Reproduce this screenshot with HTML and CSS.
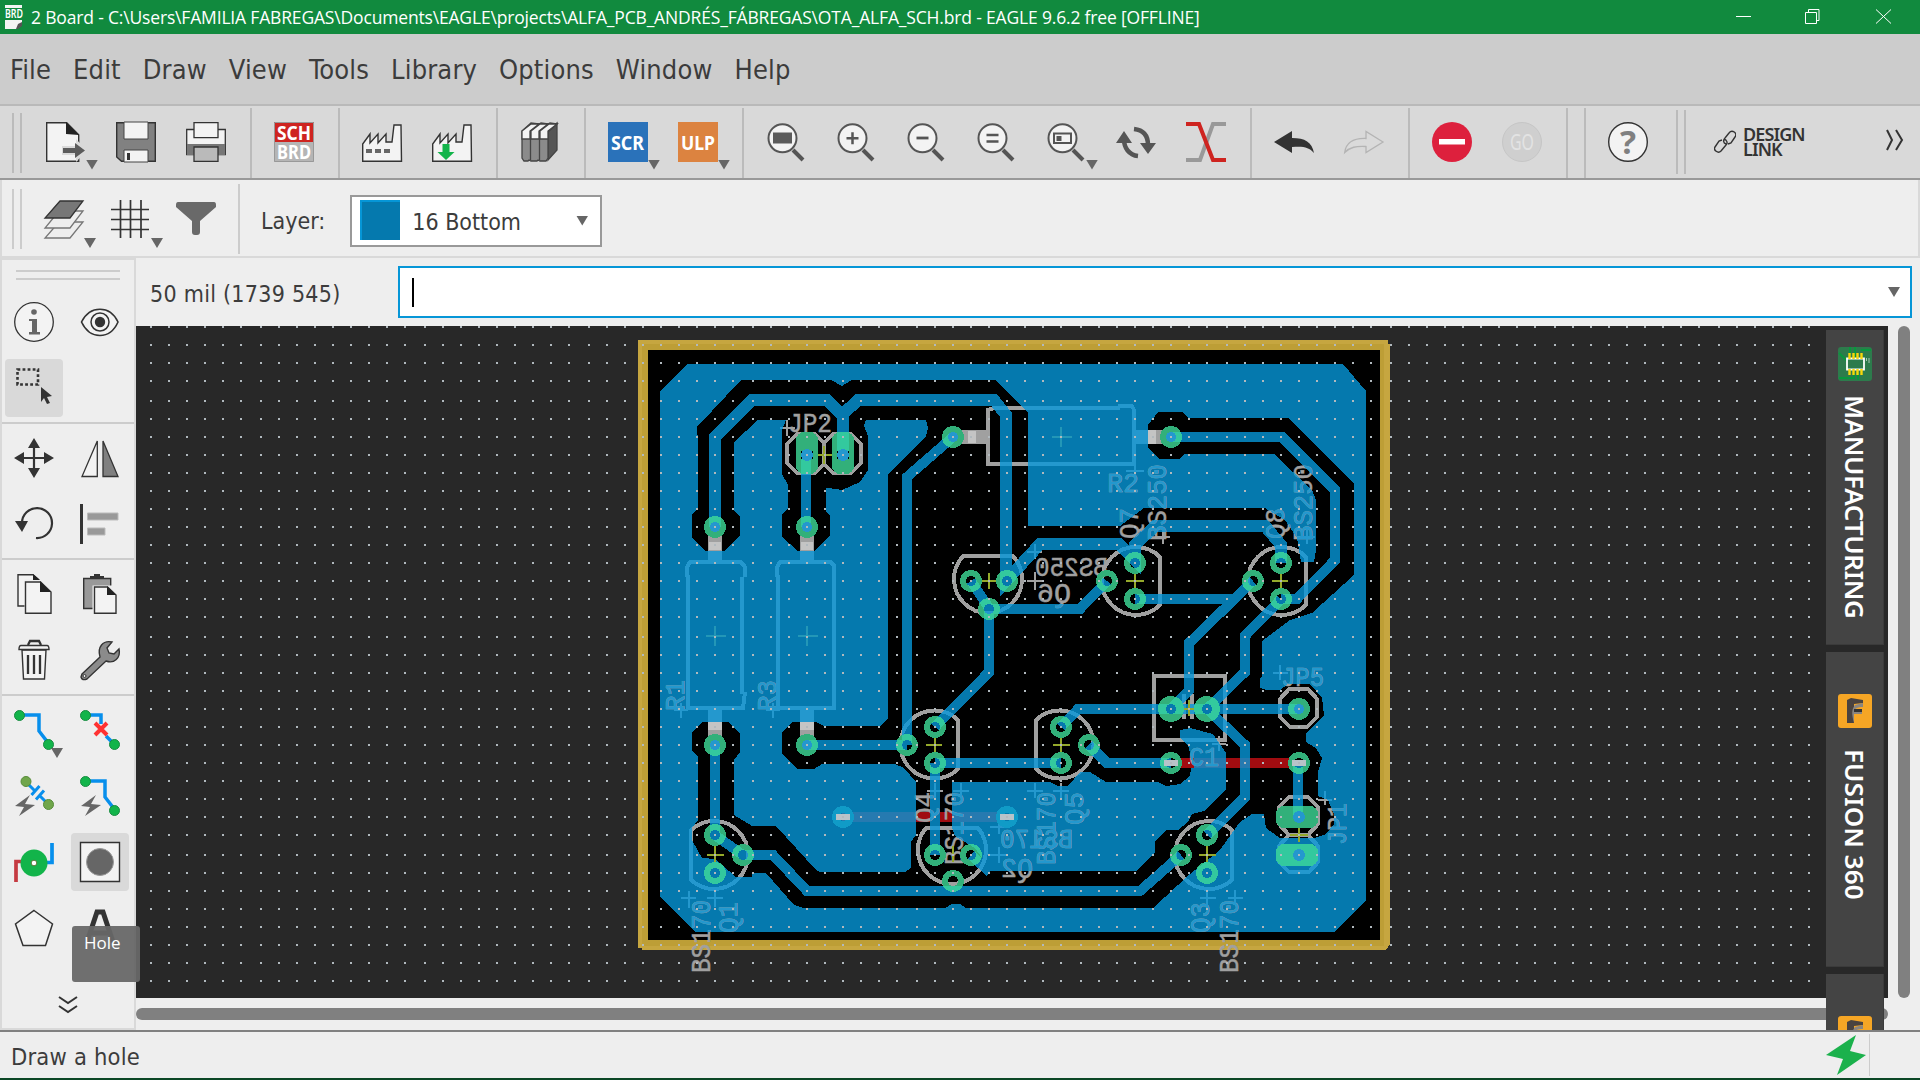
FILE: index.html
```html
<!DOCTYPE html>
<html lang="en">
<head>
<meta charset="utf-8">
<title>2 Board - EAGLE 9.6.2 free</title>
<link rel="stylesheet" href="styles.css">
</head>
<body>
<div class="app">
<header class="titlebar">
  <svg class="app-icon" width="20" height="24" viewBox="0 0 20 24"><path d="M1 0h17v3H1zM1 15h17v5l-5 4H1z" fill="#f4f4f4"/><path d="M18 17v4l-4 3h-2l2-5z" fill="#555"/><text x="1" y="13" font-size="12" font-weight="600" textLength="18" lengthAdjust="spacingAndGlyphs" fill="#fff">BRD</text></svg>
  <span class="title">2 Board - C:\Users\FAMILIA FABREGAS\Documents\EAGLE\projects\ALFA_PCB_ANDRÉS_FÁBREGAS\OTA_ALFA_SCH.brd - EAGLE 9.6.2 free [OFFLINE]</span>
  <svg class="win-controls" width="160" height="16" viewBox="0 0 160 16" fill="none" stroke="#fff"><path d="M1 7.500h15M73.500 3.500V.5h10.500v11h-3M70.500 3.500h11v11h-11zM141 .5l15 14M156 .5l-15 14"/></svg>
</header>
<nav class="menubar"><span>File</span><span>Edit</span><span>Draw</span><span>View</span><span>Tools</span><span>Library</span><span>Options</span><span>Window</span><span>Help</span></nav>

<div class="toolbar main-tools">
  <i class="grip"></i>
  <div class="tool drop"><svg viewBox="0 0 40 40"><path d="M.7.7h20l12 12v26.600H.7z" fill="#f3f3f3" stroke="#333" stroke-width="1.400"/><path d="M20 0l13 13-13-1z" fill="#222"/><path d="M16 24h14v-7l11 11.500L30 40v-7H16z" fill="#d9d9d9"/><path d="M17 26h12v-5l10 7.500-10 7.500v-5H17z" fill="#5b5b5b"/></svg></div>
  <div class="tool"><svg viewBox="0 0 40 40"><path d="M.7.7h38.600v38.600H5.500L.7 35z" fill="#818181" stroke="#333" stroke-width="1.400"/><path d="M8 0h24v17H8zM8 28h24v12H8z" fill="#f3f3f3" stroke="#444"/><path d="M11 31h3v7h-3z" fill="#333"/></svg></div>
  <div class="tool"><svg viewBox="0 0 40 40"><path d="M.7 7.500h38.600v25H.7z" fill="#f3f3f3" stroke="#333" stroke-width="1.300"/><path d="M1 22h38v11H1z" fill="#777"/><path d="M8 .7h24v15H8z" fill="#f3f3f3" stroke="#333" stroke-width="1.300"/><path d="M8 25h24v14.300H8z" fill="#bababa" stroke="#333" stroke-width="1.300"/></svg></div>
  <i class="sep"></i>
  <div class="tool"><svg viewBox="0 0 40 40"><path fill="#ce2420" d="M0 0h40v20H0z"/><path fill="#b5b5b5" d="M0 20h40v20H0z"/><path d="M.5.5h39v39H.5z" fill="none" stroke="#999"/><g class="badge-text" font-size="20" fill="#fff"><text x="3" y="17.500" textLength="34" lengthAdjust="spacingAndGlyphs">SCH</text><text x="3" y="37" textLength="34" lengthAdjust="spacingAndGlyphs">BRD</text></g></svg></div>
  <i class="sep"></i>
  <div class="tool"><svg viewBox="0 0 40 40"><path d="M.7 39.300V22L8 12v9l8-9v9l8-9v8h6L32 3h7l.5 36.300z" fill="#f3f3f3" stroke="#333" stroke-width="1.400"/><path d="M4 29h24" stroke="#666" stroke-width="4" stroke-dasharray="6 3"/></svg></div>
  <div class="tool"><svg viewBox="0 0 40 40"><path d="M.7 39.300V22L8 12v9l8-9v9l8-9v8h6L32 3h7l.5 36.300z" fill="#f3f3f3" stroke="#333" stroke-width="1.400"/><path d="M10.500 22h7v8h5L14 38 5.500 30h5z" fill="#12b44a"/></svg></div>
  <i class="sep"></i>
  <div class="tool"><svg viewBox="0 0 40 40"><g fill="#8b8b8b" stroke="#444" stroke-width="1.300"><path d="M28 9l9-8v27l-9 10z" fill="#555"/><path d="M2 9l9-8 8 1 2-1 7 1 2-1 7 1-9 8v26l-2 3h-6l-2-1-1 1h-6l-2-1-1 1H4l-2-3z"/><path d="M2 9l9-7h8l-9 7v8H2zM11 9l9-7h8l-9 7v8h-8zM20 9l9-7h8l-9 7v8h-8z" fill="#f3f3f3"/><path d="M10.500 17v21M19.500 17v21"/></g></svg></div>
  <i class="sep"></i>
  <div class="tool drop"><svg viewBox="0 0 40 40"><path fill="#2a72ba" d="M0 0h40v40H0z"/><text class="badge-text" x="3" y="27.500" font-size="20" textLength="33" lengthAdjust="spacingAndGlyphs" fill="#fff">SCR</text></svg></div>
  <div class="tool drop"><svg viewBox="0 0 40 40"><path fill="#dc8340" d="M0 0h40v40H0z"/><text class="badge-text" x="3" y="27.500" font-size="20" textLength="34" lengthAdjust="spacingAndGlyphs" fill="#fff">ULP</text></svg></div>
  <i class="sep"></i>
  <div class="tool"><svg viewBox="-1 0 40 40"><use href="#lens"/><path fill="#5b5b5b" d="M6 10.500h19v11H6z"/></svg></div>
  <div class="tool"><svg viewBox="-1 0 40 40"><use href="#lens"/><path d="M9.500 16.300h12M15.500 10.300v12" stroke="#555" stroke-width="2.500"/></svg></div>
  <div class="tool"><svg viewBox="-1 0 40 40"><use href="#lens"/><path d="M9.500 16h12" stroke="#555" stroke-width="2.800"/></svg></div>
  <div class="tool"><svg viewBox="-1 0 40 40"><use href="#lens"/><path d="M9.500 13h12M9.500 19.500h12" stroke="#555" stroke-width="2.500"/></svg></div>
  <div class="tool drop"><svg viewBox="-1 0 40 40"><use href="#lens"/><path d="M7 11.500h17v9.500H7z" fill="none" stroke="#555" stroke-width="2"/><path fill="#555" d="M9.500 14h5v5h-5z"/></svg></div>
  <div class="tool"><svg viewBox="0 0 40 40"><path d="M8 17c0 9 5 16 14 17M32 23C32 13 27 8 18 7" fill="none" stroke="#555" stroke-width="4.500"/><path d="M8 9l8 12H0zM32 32l8-11H24z" fill="#555"/></svg></div>
  <div class="tool"><svg viewBox="0 0 40 40" fill="none" stroke-width="4"><path d="M0 38h14L27 2h13" stroke="#999"/><path d="M0 2h13l14 36h13" stroke="#ce2420"/></svg></div>
  <i class="sep"></i>
  <div class="tool"><svg viewBox="0 0 40 40"><path d="M0 20L18 9v7c13 0 20 4 22 15-5-6-11-7-22-6v6z" fill="#333"/></svg></div>
  <div class="tool"><svg viewBox="0 0 40 40"><path d="M39 20L22 9.500v7C8 16 2 21 .7 30.500 6 25 12 24 22 24.500v6z" fill="#dadada" stroke="#b4b4b4" stroke-width="1.300"/></svg></div>
  <i class="sep"></i>
  <div class="tool"><svg viewBox="0 0 40 40"><circle cx="20" cy="20" r="20" fill="#dd203d"/><path fill="#fff" d="M7 17h26v5.500H7z"/></svg></div>
  <div class="tool"><svg viewBox="0 0 40 40"><circle cx="20" cy="20" r="19.500" fill="#cfcfcf" stroke="#c6c6c6"/><text x="8" y="28" font-size="21" textLength="24" lengthAdjust="spacingAndGlyphs" fill="#e3e3e3">GO</text></svg></div>
  <i class="sep closing"></i><i class="sep opening"></i>
  <div class="tool"><svg viewBox="0 0 40 40"><circle cx="20" cy="20" r="19.300" fill="#f3f3f3" stroke="#333" stroke-width="1.400"/><text x="12" y="32" font-size="32" font-weight="700" textLength="16" lengthAdjust="spacingAndGlyphs" fill="#808080">?</text></svg></div>
  <i class="grip second"></i>
  <svg class="link" width="22" height="24" viewBox="0 0 22 24" fill="none" stroke="#333" stroke-width="1.400"><path d="M12 14c-3-1-3-4-1-6l4-5c3-4 9 0 6 4l-4 6-3 1M10 9c3 1 4 4 2 6l-5 6c-3 3-8-1-6-4l4-6 3-1"/></svg>
  <div class="design-link"><span>DESIGN</span><span>LINK</span></div>
  <svg class="more" width="18" height="24" viewBox="0 0 18 24" fill="none" stroke="#333" stroke-width="2"><path d="M1 2l5 10-5 10M10 2l6 10-6 10"/></svg>
</div>

<div class="toolbar layer-tools">
  <i class="grip"></i>
  <div class="tool drop"><svg viewBox="0 0 40 40"><g stroke="#777" fill="#eee" stroke-width="1.300"><path d="M15 22h24L26 38H1z"/><path d="M15 11h24L26 28H1z"/><path d="M16 1h23L26 18H1z" fill="#777" stroke="#333"/></g></svg></div>
  <div class="tool drop grid-tool"><svg viewBox="0 0 40 40"><path d="M9.500 0v38M19.500 0v38M30 0v38M0 9.500h38M0 19.500h38M0 29.500h38" stroke="#333" stroke-width="1.700"/></svg></div>
  <div class="tool filter-tool"><svg viewBox="0 0 40 40"><path d="M2 2h36q2 0 2 3v2L24 21v11q0 3-3 3h-2q-3 0-3-3V21L0 7V5q0-3 2-3z" fill="#696969"/></svg></div>
  <i class="sep"></i>
  <label>Layer:</label>
  <div class="combo"><i class="swatch"></i><span>16 Bottom</span><i class="arrow"></i></div>
</div>

<div class="workspace">
<aside class="palette">
  <i class="palette-grip"></i>
  <div class="group">
    <div class="cell"><svg viewBox="0 0 40 40"><circle cx="20" cy="20" r="19.300" fill="#f3f3f3" stroke="#333" stroke-width="1.300"/><circle cx="20" cy="10" r="2.800" fill="#666"/><path d="M15 17h8v13h3v2.500H15V30h3V19h-3z" fill="#666"/></svg></div>
    <div class="cell"><svg viewBox="0 0 40 40"><path d="M1.500 20C10 3 30 3 38 20 30 38 10 38 1.500 20z" fill="#f3f3f3" stroke="#333" stroke-width="1.600"/><circle cx="20" cy="20" r="9" fill="none" stroke="#333" stroke-width="1.500"/><circle cx="20" cy="20" r="5.200" fill="#333"/></svg></div>
    <div class="cell active"><svg viewBox="0 0 40 40"><path d="M3.500 1.500H24v15H3.500z" fill="none" stroke="#333" stroke-width="2.600" stroke-dasharray="2.800 2.260"/><path d="M27 19l11 9-5 1 3 6-3 1-3-6-3 4z" fill="#333"/></svg></div>
    <div></div>
  </div>
  <div class="group">
    <div class="cell"><svg viewBox="0 0 40 40"><path d="M6 20h28M20 6v28" stroke="#333" stroke-width="2.200"/><path d="M20 0l6 10H14zM20 40l6-10H14zM0 20l10-6v12zM40 20l-10-6v12z" fill="#333"/></svg></div>
    <div class="cell"><svg viewBox="0 0 40 40"><path d="M17.300 3v35.500H2z" fill="#f3f3f3" stroke="#333" stroke-width="1.300"/><path d="M23 3v35.500h15z" fill="#808080" stroke="#333" stroke-width="1.300"/></svg></div>
    <div class="cell"><svg viewBox="0 0 40 40"><path d="M8 19a15 15 0 1 1 14 15" fill="none" stroke="#333" stroke-width="2.200"/><path d="M1 17h13L8 28z" fill="#333"/></svg></div>
    <div class="cell"><svg viewBox="0 0 40 40"><path d="M0 0h3v40H0z" fill="#333"/><path d="M7.500 9h30.500v7H7.500zM7.500 24H25v7H7.500z" fill="#999" stroke="#bbb"/></svg></div>
  </div>
  <div class="group">
    <div class="cell"><svg viewBox="0 0 40 40" stroke="#333" stroke-width="1.400" fill="#f3f3f3"><path d="M4 .7h15L25 6v26H4z"/><path d="M12 7h15l10 10v22.300H12z" stroke="#eee" stroke-width="3"/><path d="M11.500 8h15L37 18v21.300H11.500z"/><path d="M26 7l11 11H26zM19 0l7 6h-7z" fill="#222" stroke="none"/></svg></div>
    <div class="cell"><svg viewBox="0 0 40 40"><path d="M3.700 4.500h27V34.500h-27z" fill="#999" stroke="#333" stroke-width="1.400"/><path d="M10 5V2h4V0h6v2h4v3z" fill="#333"/><path d="M12.500 11.500H37V40H12.500z" fill="#eee"/><path d="M14.500 13h13L36 21v18.300H14.500z" fill="#f3f3f3" stroke="#333" stroke-width="1.400"/><path d="M27 12v9h9z" fill="#222"/></svg></div>
    <div class="cell"><svg viewBox="0 0 40 40"><path d="M8 10h24l-1.500 29h-21z" fill="#f3f3f3" stroke="#333" stroke-width="1.400"/><path d="M14 5l2-4h9l2 4" fill="none" stroke="#333" stroke-width="2.300"/><path d="M7 5.500h26q2 0 2 4H5q0-4 2-4z" fill="#f3f3f3" stroke="#333" stroke-width="1.400"/><path d="M14 15v19M20 15v19M26 15v19" stroke="#333" stroke-width="2.300"/></svg></div>
    <div class="cell"><svg viewBox="0 0 40 40"><path d="M2 34L20 17C17 7 23 0 32 2l-5 6 2 5 5 1 5-5c2 9-5 15-13 12L7 39q-5 2-6-2z" fill="#8b8b8b" stroke="#333" stroke-width="1.400"/><circle cx="4.500" cy="36" r="1.500" fill="#eee" stroke="#333"/></svg></div>
  </div>
  <div class="group">
    <div class="cell drop"><svg viewBox="0 0 40 40"><path d="M6 5h19v16l10 13" fill="none" stroke="#078fec" stroke-width="3.500"/><g fill="#12b44a" stroke="#168c40"><circle cx="5.500" cy="5.500" r="5"/><circle cx="34.500" cy="34.500" r="5"/></g></svg></div>
    <div class="cell"><svg viewBox="0 0 40 40"><path d="M6 5h15v9M26 26l8 8" fill="none" stroke="#078fec" stroke-width="3.500"/><g fill="#12b44a" stroke="#168c40"><circle cx="5.500" cy="5.500" r="5"/><circle cx="34.500" cy="34.500" r="5"/></g><path d="M15 13l12 12M27 13L15 25" stroke="#ff3232" stroke-width="4"/></svg></div>
    <div class="cell"><svg viewBox="0 0 40 40"><path d="M12 6l9 9M26 20l9 9M17.500 19l8-9M22 23.500l8-9" fill="none" stroke="#078fec" stroke-width="3"/><g fill="#70a64b" stroke="#578c39"><circle cx="12" cy="5.500" r="5"/><circle cx="34.500" cy="28.500" r="5"/></g><path d="M16 19L1 30l9 1-5 9 16-11-10-1z" fill="#666"/></svg></div>
    <div class="cell"><svg viewBox="0 0 40 40"><path d="M6 5h19v16l10 13" fill="none" stroke="#078fec" stroke-width="3.500"/><g fill="#12b44a" stroke="#168c40"><circle cx="5.500" cy="5.500" r="5"/><circle cx="34.500" cy="34.500" r="5"/></g><path d="M16 19L1 30l9 1-5 9 16-11-10-1z" fill="#666"/></svg></div>
    <div class="cell"><svg viewBox="0 0 40 40"><path d="M10 19.500H2V40" fill="none" stroke="#c53a41" stroke-width="3.700"/><path d="M32 20.500h6V1" fill="none" stroke="#078fec" stroke-width="3.700"/><circle cx="20" cy="21" r="13.500" fill="#12b44a"/><circle cx="20" cy="21" r="2.800" fill="#fff" stroke="#587b39"/></svg></div>
    <div class="cell active"><svg viewBox="0 0 40 40"><path d="M.5.5h39v39H.5z" fill="#f3f3f3" stroke="#333" stroke-width="1.400"/><circle cx="20" cy="20" r="13.500" fill="#666" stroke="#999"/></svg></div>
    <div class="cell"><svg viewBox="0 0 40 40"><path d="M20 2.500l18.500 13.500-7 21.500H9L1.500 16z" fill="#f3f3f3" stroke="#333" stroke-width="1.500"/></svg></div>
    <div class="cell"><svg viewBox="0 0 40 40"><path d="M7 34L17 4h6l10 30M11 25h18" fill="none" stroke="#333" stroke-width="5"/></svg></div>
  </div>
  <svg class="palette-more" width="20" height="18" viewBox="0 0 20 18" fill="none" stroke="#333" stroke-width="2"><path d="M1 1l9 6 9-6M1 10l9 6 9-6"/></svg>
  <div class="tooltip">Hole</div>
</aside>

<main class="editor">
  <div class="command"><span class="coords">50 mil (1739 545)</span><div class="input"><i class="caret"></i><i class="arrow"></i></div></div>
  <div class="view">
  <div class="canvas">
  <svg class="board" width="1752" height="672" viewBox="136 326 1752 672">
    <defs>
      <path id="plane" d="M660 391L688 364H1343L1366 391V900L1334 932H696L660 897z"/>
      <path id="clear" d="M698 443L697 427 741 380H831L842 386 852 380H996L1028 413V526H1120L1144 508H1265L1285 520 1297 538 1301 562H1314L1316 550V500L1312 490 1274 454H1184L1180 459H1160L1148 448V425L1158 412H1182L1188 418H1288L1354 483V575L1312 613 1290 620 1262 641V676L1260 678V688L1266 690H1280L1288 684H1310L1322 698 1324 715 1306 733V742L1316 748 1322 758 1318 772V796L1328 800 1334 814V824L1326 834 1314 838H1280L1266 828 1264 814H1252L1240 822 1220 850 1190 874 1153 908H966L960 904H952L945 908H804L794 905 766 873H752V877H736L715 859 702 858 692 840V828L698 820V757L692 750V732L702 722H728L740 733V752L734 760V815L752 826H776L816 870 820 872H905L911 868V842L916 835V782L904 768 895 764H822L814 769H798L782 754V732L792 722H816L824 726H880L888 718V475L926 436 928 428 926 420H866L864 426 868 436V470L860 482 842 490 828 488H826V511L830 516V535L814 551H798L782 537V514L788 508V485L782 474V430L786 420H758L734 442V511L740 516V535L724 551H705L692 538V514L698 508z"/>
      <path id="island" d="M952 782H1050L1058 786H1068L1080 772H1090L1106 782H1158L1166 786 1180 784 1190 776 1192 762 1188 745 1180 738V730L1190 728 1213 734 1226 753V790L1204 811 1192 814 1188 822 1178 830H1166L1155 842V853L1136 871H982L985 862 975 848 955 836 952 828z"/>
      <g id="traces" fill="none" stroke-width="10">
        <path d="M843 455V414M715 527V437L752 400H827L842 415 858 400H994L1006 415V581L1040 544H1119L1135 560V545L1155 526H1265L1281 545V563" stroke-width="12"/>
        <path d="M806 455V527M953 437L907 477V745M971 581L989 608V672L935 727M989 609H1080L1107 581M1135 599H1235M1253 581L1189 643V690L1171 709M1281 599L1245 636V672L1207 709M1171 437H1282L1335 490V560L1297 599H1281M806 745H907M935 763H1061M1061 727L1078 709H1298M1207 709L1245 745V797L1207 835M1089 745L1107 763H1171M1298 763V815M715 745V835L743 855H773L807 891H1140L1181 855M935 763V855M971 855L990 872"/>
      </g>
      <mask id="on-copper" maskUnits="userSpaceOnUse" x="136" y="326" width="1752" height="672">
        <use href="#plane" fill="#fff"/><use href="#clear" fill="#000"/><use href="#island" fill="#fff"/><use href="#traces" stroke="#fff"/>
      </mask>
      <g id="silk" fill="none" stroke-width="4">
        <path d="M687 577V567L690 562H741L745 567V577M688 575V708H743L745 692M742 577V694M777 577V567L780 562H831L835 567M778 575V708H834V567"/>
        <path d="M1120 408H994L988 410V464H1120M1118 406H1132L1134 410V464H1118M1154 676H1225V740H1154zM1184 694V719M1192 694V719"/>
        <path d="M1160 557A34 34 0 1 0 1160 605zM1306 557A34 34 0 1 0 1306 605zM958 720A34 34 0 1 0 958 769zM1036 720A34 34 0 1 1 1036 769zM963 556H1013A34 34 0 1 1 963 556zM926 828H978A34 34 0 1 1 926 828zM691 830A34 34 0 1 1 691 880zM1232 830A34 34 0 1 0 1232 880z"/>
        <path d="M797 434H815L824 443 833 434H851L861 444V463L851 473H833L824 464 815 473H797L787 463V444zM824 443V464M1289 689H1308L1317 699V717L1307 727H1290L1280 717V699zM1289 797H1308L1318 807V824L1308 835 1318 846V862L1309 872H1289L1279 862V846L1289 835 1279 824V807zM1289 835H1308"/>
        <path stroke-width="2" d="M780 428h15M787 420v16M1126 471h18M1135 462v18M1155 537h15M1163 529v15M1300 537h15M1307 529v15M1027 552h15M1035 544v15M1027 581h17M1035 572v18M1273 673h15M1280 665v15M1212 744h14M1219 736v15M1318 800h14M1325 791v14M1053 791h16M1061 783v15M1027 791h16M1035 783v15M927 791h16M935 783v15M953 791h16M961 783v15M674 710h14M681 703v15M766 710h14M773 703v15M681 898h15M689 891v17M707 898h16M715 890v17M1200 898h16M1207 890v17M1228 898h15M1235 890v15M990 827h16M999 818v16M990 855h16M999 847v16"/>
      </g>
      <g id="labels" font-size="27" stroke-width="0.5">
        <text x="788" y="432" textLength="44" lengthAdjust="spacingAndGlyphs">JP2</text>
        <text x="1107" y="492" textLength="32" lengthAdjust="spacingAndGlyphs">R2</text>
        <text x="1281" y="686" textLength="43" lengthAdjust="spacingAndGlyphs">JP5</text>
        <text x="1189" y="766" textLength="30" lengthAdjust="spacingAndGlyphs">C1</text>
        <g transform="rotate(-90)">
          <text x="-541" y="1166" textLength="77" lengthAdjust="spacingAndGlyphs">BS250</text><text x="-539" y="1138" textLength="31" lengthAdjust="spacingAndGlyphs">Q7</text>
          <text x="-541" y="1312" textLength="77" lengthAdjust="spacingAndGlyphs">BS250</text><text x="-539" y="1284" textLength="31" lengthAdjust="spacingAndGlyphs">Q8</text>
          <text x="-711" y="684" textLength="31" lengthAdjust="spacingAndGlyphs">R1</text><text x="-711" y="776" textLength="31" lengthAdjust="spacingAndGlyphs">R3</text>
          <text x="-823" y="933" textLength="31" lengthAdjust="spacingAndGlyphs">Q4</text><text x="-865" y="963" textLength="73" lengthAdjust="spacingAndGlyphs">BS170</text>
          <text x="-865" y="1055" textLength="73" lengthAdjust="spacingAndGlyphs">BS170</text><text x="-825" y="1083" textLength="33" lengthAdjust="spacingAndGlyphs">Q5</text>
          <text x="-973" y="710" textLength="73" lengthAdjust="spacingAndGlyphs">BS170</text><text x="-933" y="737" textLength="31" lengthAdjust="spacingAndGlyphs">Q1</text>
          <text x="-933" y="1209" textLength="31" lengthAdjust="spacingAndGlyphs">Q3</text><text x="-973" y="1238" textLength="73" lengthAdjust="spacingAndGlyphs">BS170</text>
          <text x="-845" y="1346" textLength="42" lengthAdjust="spacingAndGlyphs">JP1</text>
        </g>
        <g transform="scale(-1 1)">
          <text x="-1108" y="576" textLength="73" lengthAdjust="spacingAndGlyphs">BS250</text><text x="-1071" y="602" textLength="34" lengthAdjust="spacingAndGlyphs">Q6</text>
          <text x="-1073" y="848" textLength="73" lengthAdjust="spacingAndGlyphs">BS170</text><text x="-1033" y="877" textLength="32" lengthAdjust="spacingAndGlyphs">Q2</text>
        </g>
      </g>
      <g id="leads"><path d="M708 535h14v26h-14zM800 535h14v26h-14zM708 710h14v26h-14zM800 710h14v26h-14zM960 430h28v14h-28zM1134 430h28v14h-28z"/></g>
      <g id="pads" fill="none" stroke-width="6">
        <circle cx="715" cy="527" r="8"/><circle cx="807" cy="527" r="8"/><circle cx="953" cy="437" r="8"/><circle cx="1171" cy="437" r="8"/><circle cx="971" cy="581" r="8"/><circle cx="1007" cy="581" r="8"/><circle cx="989" cy="609" r="8"/><circle cx="1135" cy="563" r="8"/><circle cx="1107" cy="581" r="8"/><circle cx="1135" cy="599" r="8"/><circle cx="1281" cy="563" r="8"/><circle cx="1253" cy="581" r="8"/><circle cx="1281" cy="599" r="8"/><circle cx="715" cy="745" r="8"/><circle cx="807" cy="745" r="8"/><circle cx="907" cy="745" r="8"/><circle cx="935" cy="727" r="8"/><circle cx="935" cy="763" r="8"/><circle cx="1061" cy="727" r="8"/><circle cx="1061" cy="763" r="8"/><circle cx="1089" cy="745" r="8"/><circle cx="1299" cy="709" r="8"/><circle cx="1171" cy="763" r="8"/><circle cx="1299" cy="763" r="8"/><circle cx="715" cy="835" r="8"/><circle cx="743" cy="855" r="8"/><circle cx="715" cy="873" r="8"/><circle cx="935" cy="855" r="8"/><circle cx="971" cy="855" r="8"/><circle cx="953" cy="881" r="8"/><circle cx="1207" cy="835" r="8"/><circle cx="1181" cy="855" r="8"/><circle cx="1207" cy="873" r="8"/>
        <g stroke-width="8"><circle cx="1171" cy="709" r="9"/><circle cx="1207" cy="709" r="9"/></g>
        <g stroke-width="12"><rect x="802" y="438" width="10" height="30" rx="2"/><rect x="838" y="438" width="10" height="30" rx="2"/><rect x="1282" y="812" width="30" height="10" rx="2"/><rect x="1282" y="850" width="30" height="10" rx="2"/></g>
      </g>
    </defs>
    <path fill="#c6a640" d="M638 340H1388V344H1390V944L1386 950H642V948H638z"/>
    <path fill="#bd9e36" d="M642 344H1384V946H642z"/>
    <path d="M648 350H1380V940H648z"/>
    <use href="#plane" fill="#0579ae"/><use href="#clear" fill="#000"/><use href="#island" fill="#0579ae"/><use href="#traces" stroke="#0579ae"/>
    <path fill="#a00c10" d="M1180 758h112v10h-112zM916 812h36v10h-36z"/>
    <path fill="#267ab0" d="M1194 758h32v10h-32zM1240 758h10v10h-10zM842 812h74v10h-74zM952 812h48v10h-48z"/><path fill="#0579ae" d="M930 812h10v10h-10z"/>
    <g class="on-black"><use href="#silk" stroke="#a0a0a0"/><use href="#labels" fill="#a0a0a0" stroke="#a0a0a0"/><use href="#leads" fill="#a0a0a0"/></g>
    <g mask="url(#on-copper)"><use href="#silk" stroke="#2498ce"/><use href="#labels" fill="#2498ce" stroke="#2498ce"/><use href="#leads" fill="#2498ce"/></g>
    <path fill="#c4c4c4" d="M709 542h12v8h-12zM801 542h12v8h-12zM708 722h14v8h-14zM800 722h14v8h-14zM968 431h8v12h-8zM1148 430h8v14h-8z"/>
    <path stroke="#2397b7" stroke-width="2" d="M706 636h20M715 626v20M798 636h20M807 626v20M1052 437h20M1061 427v20"/>
    <path stroke="#95a92b" stroke-width="2" d="M980 581h18M989 573v16M1126 581h18M1135 573v16M1272 581h16M1281 573v16M926 745h16M935 737v16M1053 745h17M1061 737v16M707 855h17M715 846v16M1199 855h17M1207 846v16M953 846v16M815 455h18M824 446v18M1290 835h18M1299 827v15M1181 709h16M1189 700v16"/>
    <use href="#pads" stroke="#32b07a"/><g mask="url(#on-copper)"><use href="#pads" stroke="#33c99e"/></g>
    <path d="M801 451h12v8h-12zM837 451h12v8h-12z"/>
    <g fill="#2498ce"><circle cx="715" cy="527" r="5"/><circle cx="807" cy="527" r="5"/><circle cx="953" cy="437" r="5"/><circle cx="1171" cy="437" r="5"/><circle cx="715" cy="745" r="5"/><circle cx="807" cy="745" r="5"/><circle cx="807" cy="455" r="6"/><circle cx="843" cy="455" r="6"/><circle cx="1299" cy="817" r="6"/><circle cx="1299" cy="855" r="6"/><circle cx="1299" cy="709" r="5"/></g>
    <g fill="none" stroke="#109bc7" stroke-width="7"><circle cx="843" cy="817" r="7.500"/><circle cx="1007" cy="817" r="7.500"/></g>
    <path fill="#b8c3c9" d="M836 814h14v6h-14zM1000 814h14v6h-14zM1164 760h14v6h-14zM1292 760h14v6h-14z"/>
    <path id="dots" fill="#b1b9be"/>
  </svg>
  </div>
  <i class="vthumb"></i><i class="hthumb"></i>
  <div class="side-tabs">
    <div class="tab"><svg width="34" height="34" viewBox="0 0 34 34"><rect width="34" height="34" rx="3" fill="#2d7b4c"/><path d="M1 6l10 10M12 0v8M17 0v10M23 3h10M1 31h15v-6M20 33v-8" stroke="#07983c" stroke-width="2" fill="none"/><path d="M9 11.500h17v11H9z" fill="#2d7b4c" stroke="#fff" stroke-width="1.800"/><path d="M11.500 6v6M15.500 6v6M19.500 6v6M23.500 6v6M11.500 22v6M15.500 22v6M19.500 22v6M23.500 22v6" stroke="#f8d80a" stroke-width="2.400"/><path d="M28.500 11v3M31 11v5" stroke="#aac8b3"/></svg><span>MANUFACTURING</span></div>
    <div class="tab fusion"><svg width="34" height="34" viewBox="0 0 34 34"><use href="#fusion"/></svg><span>FUSION 360</span></div>
    <div class="tab fusion"><svg width="34" height="34" viewBox="0 0 34 34"><use href="#fusion"/></svg></div>
  </div>
  </div>
</main>
</div>
<footer class="status"><span>Draw a hole</span><svg width="40" height="40" viewBox="0 0 40 40"><path d="M30 0L0 20l17 4-6 16 29-20-16-4z" fill="#1bb14c"/></svg><i></i></footer>
</div>
<svg width="0" height="0" class="library">
  <defs>
    <g id="lens"><path d="M26 28l10 10" stroke="#555" stroke-width="4"/><circle cx="15.500" cy="16.300" r="14" fill="#f3f3f3" stroke="#555" stroke-width="2"/></g>
    <g id="fusion"><rect width="34" height="34" rx="3" fill="#f6a625"/><path d="M9 6l4-2 12 2v3l-9 1v19H9z" fill="#4a4340"/><path d="M16 29c-2-8-3-13 1-18l8-2v4c-5 0-8 1-9 4h8v3h-8z" fill="#8a8580"/><path d="M16 15h8v3h-8z" fill="#333"/></g>
  </defs>
</svg>
<script src="grid.js"></script>
</body>
</html>
```
FILE: styles.css
```css
* { box-sizing: border-box; }
body { margin: 0; background: #eee; color: #3c3c3c; font: 23px "DejaVu Sans Condensed", "DejaVu Sans", sans-serif; font-stretch: condensed; overflow: hidden; }
i { display: block; flex: none; }
svg { display: block; flex: none; }
svg text { font-family: "Noto Sans", sans-serif; }
.app { width: 1920px; height: 1080px; display: flex; flex-direction: column; }
.library { position: absolute; }

.titlebar { flex: none; height: 34px; background: #118a3e; color: #fff; display: flex; align-items: center; padding: 0 25px 0 4px; }
.title { flex: 1; margin-left: 7px; font: 17.500px/34px "Open Sans", sans-serif; white-space: nowrap; letter-spacing: -0.17px; }
.app-icon { overflow: visible; }
.win-controls { margin-top: -1px; }

.menubar { flex: none; height: 72px; background: #ccc; border-bottom: 2px solid #b9b9b9; display: flex; align-items: center; gap: 22px; padding: 1px 9px 0 10px; font-size: 27px; letter-spacing: 0.15px; }

.toolbar { display: flex; align-items: center; flex: none; }
.main-tools { height: 74px; background: #d9d9d9; border-bottom: 2px solid #999; padding: 0 16px 0 12px; }
.grip { width: 10px; height: 60px; border: solid #bbb; border-width: 0 2px; }
.main-tools .grip { margin-top: 2px; }
.sep { width: 2px; height: 70px; margin: 2px 22px 0 24px; background: #bbb; }
.tool { position: relative; flex: none; width: 40px; height: 40px; margin-top: -4px; }
.tool svg { width: 40px; height: 40px; overflow: visible; }
.grip + .tool { margin-left: 24px; }
.tool + .tool { margin-left: 30px; }
.main-tools .tool { margin-top: -1px; }
.drop::after, .arrow { content: ""; width: 12px; height: 10px; background: #666; clip-path: polygon(0 0, 100% 0, 50% 100%); }
.tool.drop::after { position: absolute; left: 40px; top: 38px; }
.badge-text { font-weight: 700; }
.sep.closing { margin-right: 0; }
.sep.opening { margin-left: 16px; }
.main-tools .grip.second { margin: 0 28px; height: 64px; }
.design-link { display: flex; flex-direction: column; font: 600 18px/15px "Noto Sans", sans-serif; color: #333; margin-left: 7px; flex: 1; letter-spacing: -0.9px; }
.more { margin-top: -4px; }

.layer-tools { height: 78px; background: #eee; border: solid #d9d9d9; border-width: 0 2px 2px; padding: 2px 0 0 10px; }
.layer-tools .grip { border-color: #ccc; }
.layer-tools .grip + .tool { margin-left: 22px; }
.layer-tools .tool { margin-top: 2px; }
.layer-tools .tool + .grid-tool { margin-left: 27px; }
.layer-tools .tool + .filter-tool { margin-left: 25px; }
.layer-tools .sep { margin: 0 21px 0 22px; background: #ccc; }
.layer-tools label { margin-top: 4px; }
.combo { width: 252px; height: 52px; border: 2px solid #999; background: #fff; display: flex; align-items: center; padding: 0 10px 0 8px; margin: 3px 0 0 25px; }
.combo span { flex: 1; margin: 2px 0 0 12px; }
.combo .arrow { margin-right: 2px; }
.swatch { width: 40px; height: 40px; background: #0579ae; border: solid #0696d7; border-width: 2px 0 0 2px; margin-top: -2px; }

.workspace { flex: 1; min-height: 0; display: flex; }
.palette { position: relative; width: 136px; border: 2px solid #d9d9d9; padding-top: 10px; }
.palette-grip { height: 10px; margin: 0 14px 6px; border: solid #ccc; border-width: 2px 0; }
.group { display: grid; grid-template-columns: 58px 58px; gap: 8px; padding: 5px 3px 5px; border-bottom: 2px solid #ccc; }
.palette-grip + .group { padding: 7px 3px 5px; }
.group:nth-of-type(4) { border: 0; }
.cell { height: 58px; display: grid; place-items: center; border-radius: 4px; position: relative; }
.cell svg { width: 40px; height: 40px; overflow: visible; }
.cell.active { background: #d9d9d9; }
.cell.drop::after { position: absolute; left: 46px; top: 47px; }
.palette-more { margin: 34px auto 0; }
.tooltip { position: absolute; left: 70px; top: 666px; width: 68px; height: 56px; background: rgba(103, 103, 103, 0.95); border-radius: 3px; color: #fff; font: 17px/34px "Open Sans", sans-serif; padding-left: 12px; z-index: 2; }

.editor { flex: 1; display: flex; flex-direction: column; min-width: 0; }
.command { height: 68px; flex: none; display: flex; align-items: center; padding: 0 8px 0 14px; }
.coords { width: 248px; white-space: nowrap; letter-spacing: 0.27px; margin-top: 3px; }
.input { flex: 1; height: 52px; border: 2px solid #0696d7; background: #fff; display: flex; align-items: center; justify-content: space-between; padding: 0 10px 0 12px; }
.caret { width: 2px; height: 29px; background: #000; }
.view { position: relative; flex: 1; }
.canvas { width: 1752px; height: 672px; background: #282828; overflow: hidden; }
.board { shape-rendering: crispEdges; }
.board text { font-family: "Liberation Mono", monospace; }
.vthumb, .hthumb { position: absolute; background: #808080; border-radius: 6px; }
.vthumb { left: 1762px; top: 0; width: 12px; height: 672px; }
.hthumb { left: 0; top: 682px; width: 1752px; height: 12px; }
.side-tabs { position: absolute; left: 1690px; top: 0; width: 62px; height: 704px; padding-top: 4px; display: flex; flex-direction: column; gap: 7px; overflow: hidden; background: linear-gradient(#282828, #282828) 0 0 / 62px 672px no-repeat; }
.tab { width: 58px; height: 315px; flex: none; background: #444; display: flex; flex-direction: column; align-items: center; padding-top: 17px; border: solid #3b3b3b; border-width: 0 1px 1px 0; }
.tab span { writing-mode: vertical-rl; font: 600 26px/34px "Noto Sans", sans-serif; letter-spacing: -0.4px; color: #fff; margin-top: 14px; white-space: nowrap; }
.tab.fusion { padding-top: 42px; }
.tab.fusion span { margin-top: 21px; letter-spacing: 0.1px; }

.status { flex: none; height: 50px; border-top: 2px solid #808080; border-bottom: 2px solid #0b4625; background: #eee; display: flex; align-items: center; padding-left: 11px; font-size: 23.500px; letter-spacing: 0.2px; }
.status span { flex: 1; margin-top: 3px; }
.status i { width: 1px; height: 42px; background: #ccc; margin: 0 50px 0 3px; }
```
FILE: grid.js
```js
// Grid dots sit on a two-pixel raster, so each position is snapped to it.
let d = "";
for (let r = 0; r < 37; r++) {
  const y = 2 * Math.floor(163.7 + r * 9.08);
  for (let c = 0; c < 96; c++) {
    const x = 2 * Math.floor(75.34 + c * 9.113);
    d += `M${x} ${y}h2v2h-2z`;
  }
}
document.getElementById("dots").setAttribute("d", d);
```
